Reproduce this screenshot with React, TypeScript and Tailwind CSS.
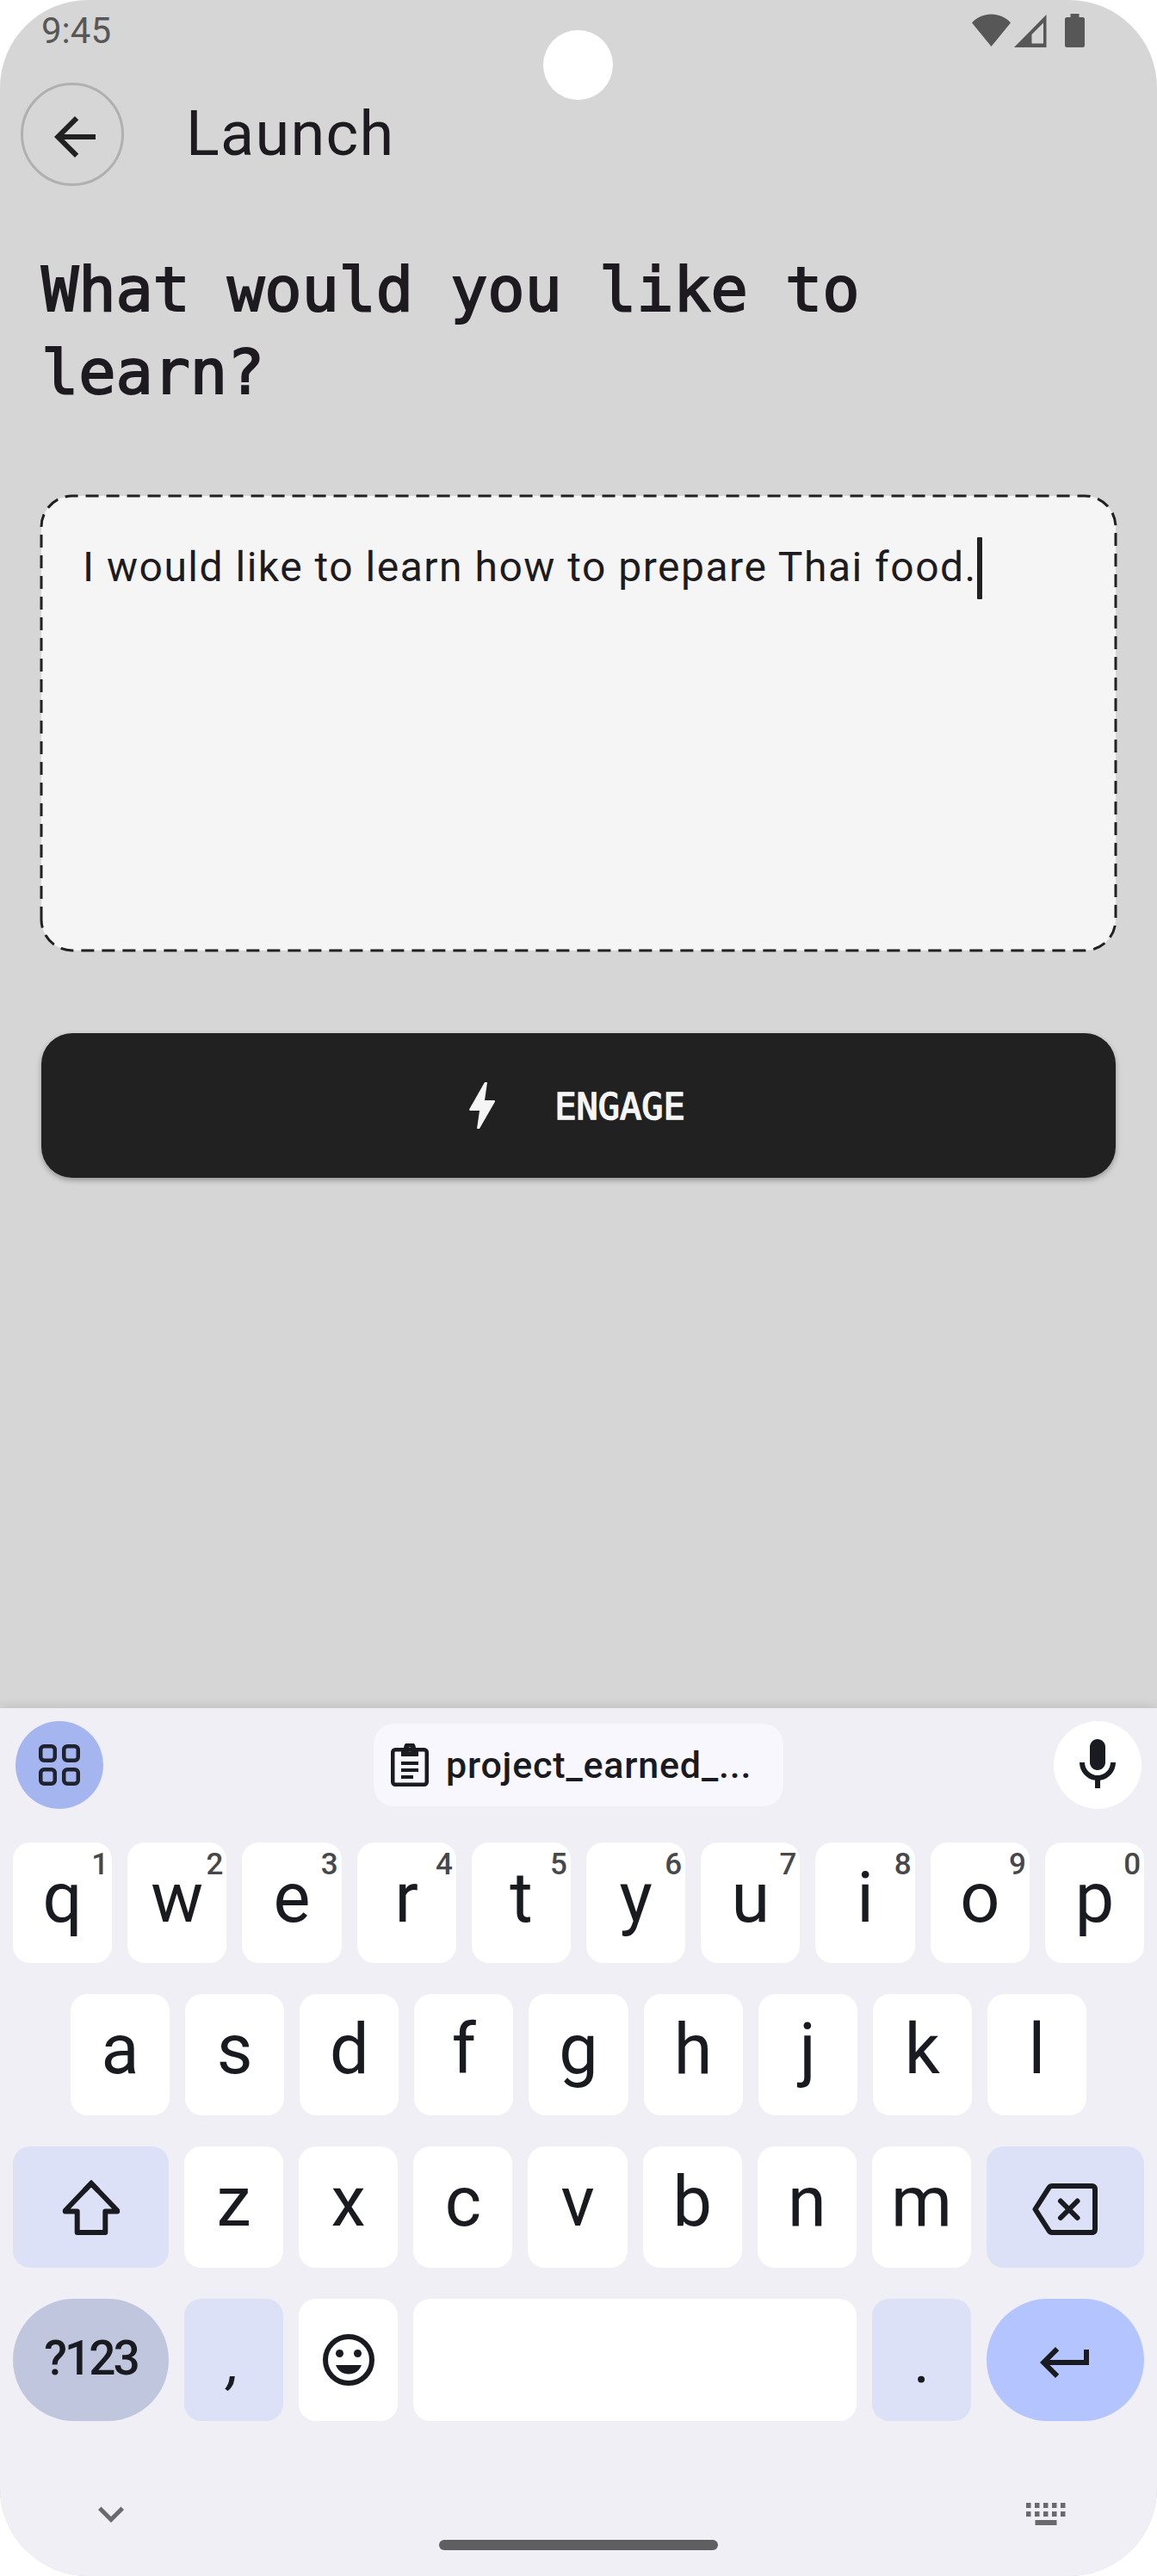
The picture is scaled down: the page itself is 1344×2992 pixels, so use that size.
import React from "react";

type KeyProps = {
  label?: string;
  hint?: string;
  className?: string;
  children?: React.ReactNode;
};

function Key({ label, hint, className = "flex-1 rounded-[20px] bg-white", children }: KeyProps) {
  return (
    <div className={`relative flex h-full min-w-0 justify-center ${className}`}>
      {label && <span className="text-[81px] leading-[130px]">{label}</span>}
      {hint && (
        <span className="absolute right-[4px] top-[9px] text-[35px] font-medium leading-[34px] text-[#47484c]">
          {hint}
        </span>
      )}
      {children}
    </div>
  );
}

const topRow = ["q", "w", "e", "r", "t", "y", "u", "i", "o", "p"];
const hints = ["1", "2", "3", "4", "5", "6", "7", "8", "9", "0"];
const homeRow = ["a", "s", "d", "f", "g", "h", "j", "k", "l"];
const bottomRow = ["z", "x", "c", "v", "b", "n", "m"];

function StatusBar() {
  return (
    <div className="flex h-24 items-start justify-between pl-12 pr-[81px] text-[#575757]">
      <span className="pt-[11px] text-[42px] leading-[50px]">9:45</span>
      <svg className="mt-4" width="134" height="40" viewBox="0 0 134 40" fill="currentColor">
        <path d="M0 10.5C6 4 14 .6 22.5 .6S39 4 45 10.5L22.5 38Z" />
        <path fillRule="evenodd" d="M49 39 86.500 1V39ZM69.500 24V34.500H83V10.500Z" />
        <path d="M114.500 0h10v4h4a2.500 2.500 0 0 1 2.500 2.500v30a2.500 2.500 0 0 1-2.500 2.500h-18a2.500 2.500 0 0 1-2.500-2.500v-30a2.500 2.500 0 0 1 2.500-2.500h4Z" />
      </svg>
    </div>
  );
}

function AppBar() {
  return (
    <div className="flex h-[120px] items-start pl-6">
      <div className="flex size-[120px] items-center justify-center rounded-full border-[3px] border-[#b0b0b0] pl-[6px] pt-[6px]">
        <svg width="72" height="72" viewBox="0 0 24 24" fill="#212121">
          <path d="M20 11H7.830l5.590-5.590L12 4l-8 8 8 8 1.410-1.410L7.830 13H20v-2z" />
        </svg>
      </div>
      <h1 className="ml-[72px] mt-[18px] text-[72px] leading-[84px] tracking-[1.3px] text-[#1d1b20]">Launch</h1>
    </div>
  );
}

function Prompt() {
  return (
    <div className="relative mt-24 h-[528px] rounded-[36px] bg-[#f5f5f5] px-12 pt-12">
      <svg className="absolute left-0 top-0 overflow-visible" width="1248" height="528" fill="none">
        <path
          d="M0 492V36A36 36 0 0 1 36 0H1212A36 36 0 0 1 1248 36V492A36 36 0 0 1 1212 528H36A36 36 0 0 1 0 492"
          stroke="#212121"
          strokeWidth="3"
          strokeDasharray="15 9"
        />
      </svg>
      <div className="flex">
        <span className="mt-[-1px] whitespace-nowrap text-[48px] leading-[72px] tracking-[1.5px] text-[#1d1b20]">
          I would like to learn how to prepare Thai food.
        </span>
        <span className="h-[72px] w-[6px] rounded-[1px] bg-[#212121]" />
      </div>
    </div>
  );
}

function SuggestionStrip() {
  return (
    <div className="flex h-[102px] items-center justify-between pl-[18px] pr-[18px]">
      <div className="flex size-[102px] items-center justify-center rounded-full bg-[#a5b5f0]">
        <svg width="48" height="48" fill="none" stroke="#20222e" strokeWidth="4.5">
          <rect x="2.250" y="2.250" width="16.500" height="16.500" rx="4" />
          <rect x="29.250" y="2.250" width="16.500" height="16.500" rx="4" />
          <rect x="2.250" y="29.250" width="16.500" height="16.500" rx="4" />
          <rect x="29.250" y="29.250" width="16.500" height="16.500" rx="4" />
        </svg>
      </div>
      <div className="flex h-24 w-[476px] items-center rounded-[24px] bg-[#f8f7fe] pl-5">
        <svg width="44" height="50" viewBox="0 0 44 50" fill="#1a1b20">
          <rect x="2.250" y="7.250" width="39.500" height="40.500" rx="3" fill="none" stroke="#1a1b20" strokeWidth="4.500" />
          <path
            fillRule="evenodd"
            d="M12 5h3a7 7 0 0 1 14 0h3v10H12ZM22 4.500a2.500 2.500 0 1 0 0 5a2.500 2.500 0 1 0 0-5Z"
          />
          <path d="M12 21h20v4H12zM12 29h20v4H12zM12 37h14v4H12z" />
        </svg>
        <span className="ml-[20px] whitespace-nowrap text-[43px] font-medium leading-[50px] tracking-[0.8px]">
          project_earned_...
        </span>
      </div>
      <div className="flex size-[102px] items-center justify-center rounded-full bg-white">
        <svg width="72" height="72" viewBox="0 0 24 24" fill="#1a1b20">
          <path d="M12 14c1.660 0 3-1.340 3-3V5c0-1.660-1.340-3-3-3S9 3.340 9 5v6c0 1.660 1.340 3 3 3z" />
          <path d="M17 11c0 2.760-2.240 5-5 5s-5-2.240-5-5H5c0 3.530 2.610 6.430 6 6.920V21h2v-3.080c3.390-.49 6-3.390 6-6.920h-2z" />
        </svg>
      </div>
    </div>
  );
}

function Keyboard() {
  return (
    <div className="mt-auto flex h-[1008px] flex-col bg-[#f0eff6] pt-[15px] text-[#1a1b20] shadow-[0_-2px_12px_rgba(0,0,0,0.1)]">
      <SuggestionStrip />
      <div className="mt-[39px] flex flex-col gap-9 px-[15px]">
        <div className="flex h-[140px] gap-[18px]">
          {topRow.map((k, i) => (
            <Key key={k} label={k} hint={hints[i]} />
          ))}
        </div>
        <div className="flex h-[141px] gap-[18px] px-[67px]">
          {homeRow.map((k) => (
            <Key key={k} label={k} />
          ))}
        </div>
        <div className="flex h-[141px] gap-[18px]">
          <Key className="w-[181px] items-center rounded-[20px] bg-[#dde1f8]">
            <svg width="68" height="66" fill="none" stroke="#1a1b20" strokeWidth="6">
              <path strokeLinejoin="round" d="M34 5 L3.800 36.500V37.500H17.700V62H50.300V37.500H64.200V36.500Z" />
              <path d="M26 13.300 34 5 42 13.300" />
            </svg>
          </Key>
          {bottomRow.map((k) => (
            <Key key={k} label={k} />
          ))}
          <Key className="w-[183px] items-center rounded-[20px] bg-[#dde1f8]">
            <svg
              className="mt-[5px]"
              width="76"
              height="60"
              fill="none"
              stroke="#1a1b20"
              strokeWidth="6"
              strokeLinecap="round"
              strokeLinejoin="round"
            >
              <path d="M3.500 30 19.500 5Q21 3 23 3H69Q73 3 73 7V53Q73 57 69 57H23Q21 57 19.500 55Z" />
              <path d="M33 20.500 52.500 40M52.500 20.500 33 40" />
            </svg>
          </Key>
        </div>
        <div className="flex h-[142px] gap-[18px]">
          <Key className="w-[181px] rounded-full bg-[#c1c6df]">
            <span className="text-[55px] font-medium leading-[138px] tracking-[-3px]">?123</span>
          </Key>
          <Key className="w-[115px] rounded-[20px] bg-[#dde1f8]">
            <span className="text-[68px] italic leading-[148px]">,</span>
          </Key>
          <Key className="w-[115px] items-center rounded-[20px] bg-white">
            <svg width="60" height="60" fill="#1a1b20">
              <circle cx="30" cy="30" r="27" fill="none" stroke="#1a1b20" strokeWidth="6" />
              <circle cx="19.500" cy="22.500" r="4.500" />
              <circle cx="40.500" cy="22.500" r="4.500" />
              <path d="M15 36H45C42.500 42.500 37 46.500 30 46.500S17.500 42.500 15 36Z" />
            </svg>
          </Key>
          <Key />
          <Key className="w-[115px] rounded-[20px] bg-[#dde1f8]">
            <span className="text-[72px] leading-[146px]">.</span>
          </Key>
          <Key className="w-[183px] items-center rounded-full bg-[#b3c4ff]">
            <svg className="mt-[6px]" width="72" height="72" viewBox="0 0 24 24" fill="#1a1b20">
              <path d="M19 7v4H5.830l3.580-3.590L8 6l-6 6 6 6 1.410-1.410L5.830 13H21V7z" />
            </svg>
          </Key>
        </div>
      </div>
      <div className="mt-[78px] flex h-[60px] justify-between pl-[99px] pr-[106px] text-[#6a6a6c]">
        <svg width="60" height="60" viewBox="0 0 24 24" fill="currentColor">
          <path d="M16.590 8.590 12 13.170 7.410 8.590 6 10l6 6 6-6z" />
        </svg>
        <svg className="mt-[17px]" width="46" height="26" fill="currentColor">
          {[0, 10, 20, 30, 40].map((x) => (
            <path key={x} d={`M${x} 0h5.500v6h-5.500zM${x} 10h5.500v6h-5.500z`} />
          ))}
          <path d="M10.500 20h25v6h-25z" />
        </svg>
      </div>
      <div className="mx-auto h-3 w-[324px] rounded-full bg-[#5f5f61]" />
    </div>
  );
}

export default function App() {
  return (
    <div className="h-[2992px] w-[1344px] overflow-hidden bg-white">
      <div className="relative flex h-full flex-col overflow-hidden rounded-[102px] bg-[#d6d6d6] font-['Roboto',sans-serif]">
        <div className="absolute left-[631px] top-[35px] size-[81px] rounded-full bg-white" />
        <StatusBar />
        <AppBar />
        <div className="mt-[72px] flex flex-col px-12">
          <h2 className="font-['DejaVu_Sans_Mono',monospace] text-[72px] leading-[96px] tracking-[-0.150px] text-[#1d1b20] [-webkit-text-stroke:2px_#1d1b20]">
            What would you like to learn?
          </h2>
          <Prompt />
          <button className="mt-24 flex h-[168px] items-center justify-center rounded-[36px] bg-[#212121] pl-12 pr-[72px] text-[#f5f5f5] shadow-[0_3px_6px_rgba(0,0,0,0.3)]">
            <svg width="72" height="72" viewBox="0 0 24 24" fill="currentColor">
              <path d="M11 21h-1l1-7H7.500c-.88 0-.33-.75-.31-.78C8.480 10.940 10.420 7.540 13.010 3h1l-1 7h3.510c.4 0 .62.190.4.660C12.970 17.550 11 21 11 21z" />
            </svg>
            <span className="ml-12 mt-1 font-['DejaVu_Sans_Mono',monospace] text-[42px] leading-[60px] [-webkit-text-stroke:1.500px_#f5f5f5]">
              ENGAGE
            </span>
          </button>
        </div>
        <Keyboard />
      </div>
    </div>
  );
}
